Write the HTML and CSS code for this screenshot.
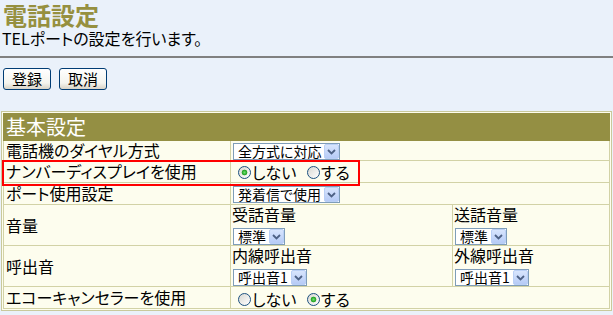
FILE: index.html
```html
<!DOCTYPE html>
<html lang="ja">
<head>
    <meta charset="UTF-8">
    <meta name="viewport" content="width=device-width, initial-scale=1.0">
    <title>電話設定</title>
    <link rel="stylesheet" href="styles.css">
</head>
<body>
    <h1 class="page-title">電話設定</h1>
    <p class="lead">TELポートの設定を行います。</p>
    <hr class="rule">

    <div class="actions">
        <button type="button" class="btn">登録</button>
        <button type="button" class="btn">取消</button>
    </div>

    <div class="panel">
        <table class="settings">
            <colgroup>
                <col class="col-label">
                <col class="col-main">
                <col>
            </colgroup>
            <tr class="row-head">
                <th colspan="3">基本設定</th>
            </tr>
            <tr class="row-1">
                <td class="label">電話機のダイヤル方式</td>
                <td colspan="2">
                    <span class="select"><span class="select-value">全方式に対応</span><span class="select-btn"><svg width="9" height="6" viewBox="0 0 9 6"><path d="M1 1l3.5 3.5L8 1" fill="none" stroke="#4d6185" stroke-width="1.8"/></svg></span></span>
                </td>
            </tr>
            <tr class="row-2">
                <td class="label">ナンバーディスプレイを使用</td>
                <td colspan="2">
                    <label class="radio"><input type="radio" name="nd" checked>しない</label>
                    <label class="radio"><input type="radio" name="nd">する</label>
                </td>
            </tr>
            <tr class="row-2">
                <td class="label">ポート使用設定</td>
                <td colspan="2">
                    <span class="select"><span class="select-value">発着信で使用</span><span class="select-btn"><svg width="9" height="6" viewBox="0 0 9 6"><path d="M1 1l3.5 3.5L8 1" fill="none" stroke="#4d6185" stroke-width="1.8"/></svg></span></span>
                </td>
            </tr>
            <tr class="row-tall">
                <td class="label">音量</td>
                <td class="sub">
                    <div class="sub-label">受話音量</div>
                    <span class="select"><span class="select-value">標準</span><span class="select-btn"><svg width="9" height="6" viewBox="0 0 9 6"><path d="M1 1l3.5 3.5L8 1" fill="none" stroke="#4d6185" stroke-width="1.8"/></svg></span></span>
                </td>
                <td class="sub">
                    <div class="sub-label">送話音量</div>
                    <span class="select"><span class="select-value">標準</span><span class="select-btn"><svg width="9" height="6" viewBox="0 0 9 6"><path d="M1 1l3.5 3.5L8 1" fill="none" stroke="#4d6185" stroke-width="1.8"/></svg></span></span>
                </td>
            </tr>
            <tr class="row-tall">
                <td class="label">呼出音</td>
                <td class="sub">
                    <div class="sub-label">内線呼出音</div>
                    <span class="select"><span class="select-value">呼出音1</span><span class="select-btn"><svg width="9" height="6" viewBox="0 0 9 6"><path d="M1 1l3.5 3.5L8 1" fill="none" stroke="#4d6185" stroke-width="1.8"/></svg></span></span>
                </td>
                <td class="sub">
                    <div class="sub-label">外線呼出音</div>
                    <span class="select"><span class="select-value">呼出音1</span><span class="select-btn"><svg width="9" height="6" viewBox="0 0 9 6"><path d="M1 1l3.5 3.5L8 1" fill="none" stroke="#4d6185" stroke-width="1.8"/></svg></span></span>
                </td>
            </tr>
            <tr class="row-last">
                <td class="label">エコーキャンセラーを使用</td>
                <td colspan="2">
                    <label class="radio"><input type="radio" name="echo">しない</label>
                    <label class="radio"><input type="radio" name="echo" checked>する</label>
                </td>
            </tr>
        </table>
        <div class="highlight"></div>
    </div>
</body>
</html>
```

FILE: styles.css
```css
/* Page base */
body {
    margin: 0;
    background-color: #eaf1fa;
    font-family: "Noto Sans CJK JP", "Liberation Sans", sans-serif;
    font-feature-settings: "palt";
    color: #000;
}

.page-title {
    margin: 0 0 0 3px;
    padding-top: 2px;
    font-size: 24px;
    line-height: 26px;
    font-weight: bold;
    color: #96903f;
}

.lead {
    margin: 0 0 0 2px;
    font-size: 16px;
    line-height: 20px;
}

.rule {
    margin: 8px 0 0 0;
    height: 2px;
    border: 0;
    background-color: #808080;
}

/* Buttons */
.actions {
    display: flex;
    gap: 8px;
    margin: 10px 0 0 3px;
}

.btn {
    width: 48px;
    height: 22px;
    padding: 0;
    border: 1px solid #003c74;
    border-radius: 3px;
    background: linear-gradient(#ffffff, #f4f4ee 70%, #d8d3c6);
    font-family: inherit;
    font-feature-settings: "palt";
    font-size: 15px;
    line-height: 18px;
    color: #000;
}

/* Settings table */
.panel {
    position: relative;
    margin: 21px 1px 0 1px;
    padding: 1px;
    border: 1px solid #c9c99b;
    background-color: #fdfdee;
}

.settings {
    width: 100%;
    border-collapse: collapse;
    table-layout: fixed;
    font-size: 16px;
}

.col-label {
    width: 227px;
}

.col-main {
    width: 222px;
}

.settings th {
    height: 26px;
    padding: 0 0 0 2px;
    border: 1px solid #948f43;
    background-color: #948f43;
    color: #ffffff;
    font-size: 20px;
    font-weight: normal;
    text-align: left;
    line-height: 24px;
}

.settings td {
    padding: 0 0 0 1px;
    border: 1px solid #d2d2a6;
    line-height: 17px;
    white-space: nowrap;
}

.settings td.label {
    padding-left: 2px;
}

.settings td.sub {
    vertical-align: top;
}

.row-1 td {
    height: 19px;
}

.row-2 td {
    height: 21px;
}

.row-tall td {
    height: 40px;
}

.row-last td {
    height: 21px;
}

.sub-label {
    line-height: 18px;
    margin-bottom: 3px;
}

/* Fake XP style select */
.select {
    display: inline-flex;
    align-items: center;
    box-sizing: border-box;
    height: 17px;
    margin-left: 1px;
    border: 1px solid #7f9db9;
    background-color: #ffffff;
    font-size: 14px;
    line-height: 15px;
    vertical-align: middle;
}

.select-value {
    padding: 0 3px 0 4px;
}

.select-btn {
    display: flex;
    align-items: center;
    justify-content: center;
    box-sizing: border-box;
    width: 15px;
    height: 15px;
    border: 1px solid #bad0f6;
    border-radius: 2px;
    background: linear-gradient(#d8e5fd, #b6cbf6);
}

/* XP style radios */
.radio {
    display: inline-flex;
    align-items: center;
    margin-left: 6px;
    margin-right: 1px;
    vertical-align: middle;
}

.radio input {
    appearance: none;
    width: 13px;
    height: 13px;
    margin: 0 1px 0 0;
    border: 1px solid #1c5180;
    border-radius: 50%;
    background: linear-gradient(135deg, #d8d8d2, #ffffff);
}

.radio input:checked {
    background: radial-gradient(circle, #6ee06e 0, #21a121 2.5px, transparent 3.2px),
        linear-gradient(135deg, #d8d8d2, #ffffff);
}

/* Red annotation box over the number display row */
.highlight {
    position: absolute;
    left: 0;
    top: 48px;
    width: 354px;
    height: 22px;
    border: 2px solid #ff0000;
}
```
